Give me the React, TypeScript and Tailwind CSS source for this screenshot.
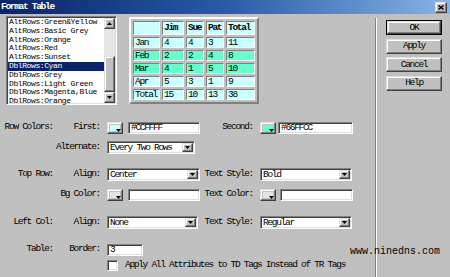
import React from "react";

const sunken =
  "border border-t-[#808080] border-l-[#808080] border-r-white border-b-white shadow-[inset_1px_1px_0_#404040,inset_-1px_-1px_0_#dfdfdf]";
const raised =
  "border border-t-[#dfdfdf] border-l-[#dfdfdf] border-r-[#404040] border-b-[#404040] shadow-[inset_-1px_-1px_0_#808080,inset_1px_1px_0_#ffffff]";

function DownArrow() {
  return (
    <svg width="5" height="3" viewBox="0 0 5 3">
      <path d="M0 0h5L2.5 3z" fill="#000" />
    </svg>
  );
}
function UpArrow() {
  return (
    <svg width="5" height="3" viewBox="0 0 5 3">
      <path d="M0 3h5L2.5 0z" fill="#000" />
    </svg>
  );
}

function Select({ className, value }: { className: string; value: string }) {
  return (
    <div className={`${sunken} ${className} h-[13px] bg-white flex items-stretch p-[1px]`}>
      <span className="flex-1 pl-[1px] leading-[9px] whitespace-nowrap overflow-hidden">{value}</span>
      <div className={`${raised} w-[11px] bg-[#c0c0c0] flex items-center justify-center`}>
        <DownArrow />
      </div>
    </div>
  );
}

function Input({ className, value }: { className: string; value: string }) {
  return (
    <div className={`${sunken} ${className} h-[12px] bg-white flex items-center pl-[2px] leading-[9px]`}>
      {value}
    </div>
  );
}

function Swatch({ fill }: { fill: string }) {
  return (
    <div className={`${raised} w-[16px] h-[12px] bg-[#c0c0c0] p-[2px] relative`}>
      <div className={`w-full h-full ${fill}`} />
      <div className="absolute right-[1px] bottom-[1px] flex">
        <DownArrow />
      </div>
    </div>
  );
}

const listItems = [
  "AltRows:Green&Yellow",
  "AltRows:Basic Grey",
  "AltRows:Orange",
  "AltRows:Red",
  "AltRows:Sunset",
  "DblRows:Cyan",
  "DblRows:Grey",
  "DblRows:Light Green",
  "DblRows:Magenta,Blue",
  "DblRows:Orange",
];

const tableRows: { cells: string[]; bg: string }[] = [
  { cells: ["Jan", "4", "4", "3", "11"], bg: "bg-[#ccffff]" },
  { cells: ["Feb", "2", "2", "4", "8"], bg: "bg-[#66ffcc]" },
  { cells: ["Mar", "4", "1", "5", "10"], bg: "bg-[#66ffcc]" },
  { cells: ["Apr", "5", "3", "1", "9"], bg: "bg-[#ccffff]" },
  { cells: ["Total", "15", "10", "13", "38"], bg: "bg-[#ccffff]" },
];

const cellBorder = "border border-t-[#808080] border-l-[#808080] border-r-white border-b-white";

function Button({ label, def }: { label: string; def?: boolean }) {
  if (def) {
    return (
      <div className="w-[56px] h-[15px] border border-black">
        <div className={`${raised} w-full h-full bg-[#c0c0c0] flex items-center justify-center leading-none`}>
          {label}
        </div>
      </div>
    );
  }
  return (
    <div className={`${raised} w-[56px] h-[15px] bg-[#c0c0c0] flex items-center justify-center leading-none`}>
      {label}
    </div>
  );
}

export default function App() {
  return (
    <div className="w-[450px] h-[277px] bg-[#c0c0c0] relative overflow-hidden flex flex-col text-black font-['Liberation_Mono',monospace] text-[9.5px] tracking-[-1.3px]">
      {/* Title bar */}
      <div className="h-[14px] bg-linear-to-r from-[#0a246a] via-[#2a5aa8] to-[#8ab4e4] flex items-center justify-between pl-[1px] pr-[3px]">
        <span className="text-white font-bold leading-none">Format Table</span>
        <div className={`${raised} w-[12px] h-[11px] bg-[#c0c0c0] flex items-center justify-center`}>
          <svg width="6" height="5" viewBox="0 0 6 5">
            <path d="M0.5 0.5L5.5 4.5M5.5 0.5L0.5 4.5" stroke="#000" strokeWidth="1.4" />
          </svg>
        </div>
      </div>

      {/* Body */}
      <div className="flex-1 flex flex-row">
        {/* Left area */}
        <div className="w-[375px] flex flex-col">
          {/* Top section */}
          <div className="h-[91px] flex items-start pl-[6px]">
            {/* Listbox */}
            <div className={`${sunken} mt-[2px] w-[111px] h-[89px] bg-white flex p-[1px]`}>
              <div className="flex-1 flex flex-col text-[8px] tracking-[-0.4px]">
                {listItems.map((it) => (
                  <div
                    key={it}
                    className={`h-[8.8px] leading-[8.8px] pl-[1px] whitespace-nowrap ${
                      it === "DblRows:Cyan" ? "bg-[#0a246a] text-white" : ""
                    }`}
                  >
                    {it}
                  </div>
                ))}
              </div>
              <div className="w-[11px] flex flex-col">
                <div className={`${raised} h-[11px] bg-[#c0c0c0] flex items-center justify-center`}>
                  <UpArrow />
                </div>
                <div className="flex-1 bg-[#e6e6e6] flex flex-col justify-end">
                  <div className={`${raised} h-[36px] bg-[#c0c0c0]`} />
                </div>
                <div className={`${raised} h-[11px] bg-[#c0c0c0] flex items-center justify-center`}>
                  <DownArrow />
                </div>
              </div>
            </div>

            {/* Preview table */}
            <div className="ml-[12px] mt-[3px] border-2 border-t-white border-l-white border-r-[#808080] border-b-[#808080] bg-[#c0c0c0] p-[2px] grid grid-cols-[27px_22px_18px_18px_29px] grid-rows-[14px_11px_11px_11px_11px_11px] gap-[2px]">
              {["", "Jim", "Sue", "Pat", "Total"].map((h, i) => (
                <div key={"h" + i} className={`${cellBorder} bg-[#ccffff] font-bold flex items-center pl-[1px] leading-none`}>
                  {h}
                </div>
              ))}
              {tableRows.map((r) =>
                r.cells.map((c, i) => (
                  <div key={r.cells[0] + i} className={`${cellBorder} ${r.bg} flex items-center pl-[1px] leading-none`}>
                    {c}
                  </div>
                ))
              )}
            </div>
          </div>

          {/* Row Colors */}
          <div className="mt-[16px] h-[13px] flex items-center">
            <span className="w-[53px] text-right">Row Colors:</span>
            <span className="w-[47px] text-right">First:</span>
            <div className="ml-[7px]"><Swatch fill="bg-[#ccffff]" /></div>
            <Input className="ml-[5px] w-[72px]" value="#CCFFFF" />
            <span className="w-[53px] text-right">Second:</span>
            <div className="ml-[7px]"><Swatch fill="bg-[#66ffcc]" /></div>
            <Input className="ml-[2px] w-[75px]" value="#66FFCC" />
          </div>

          {/* Alternate */}
          <div className="mt-[7px] h-[13px] flex items-center">
            <span className="w-[53px]" />
            <span className="w-[47px] text-right">Alternate:</span>
            <Select className="ml-[7px] w-[88px]" value="Every Two Rows" />
          </div>

          {/* Top Row */}
          <div className="mt-[14px] h-[13px] flex items-center">
            <span className="w-[53px] text-right">Top Row:</span>
            <span className="w-[47px] text-right">Align:</span>
            <Select className="ml-[7px] w-[93px]" value="Center" />
            <span className="w-[53px] text-right">Text Style:</span>
            <Select className="ml-[7px] w-[92px]" value="Bold" />
          </div>

          {/* Bg Color */}
          <div className="mt-[7px] h-[13px] flex items-center">
            <span className="w-[53px]" />
            <span className="w-[47px] text-right">Bg Color:</span>
            <div className="ml-[7px]"><Swatch fill="bg-[#e4e4e4]" /></div>
            <Input className="ml-[5px] w-[72px]" value="" />
            <span className="w-[53px] text-right">Text Color:</span>
            <div className="ml-[7px]"><Swatch fill="bg-[#e4e4e4]" /></div>
            <Input className="ml-[4px] w-[73px]" value="" />
          </div>

          {/* Left Col */}
          <div className="mt-[15px] h-[13px] flex items-center">
            <span className="w-[53px] text-right">Left Col:</span>
            <span className="w-[47px] text-right">Align:</span>
            <Select className="ml-[7px] w-[91px]" value="None" />
            <span className="w-[55px] text-right">Text Style:</span>
            <Select className="ml-[7px] w-[92px]" value="Regular" />
          </div>

          {/* Table */}
          <div className="mt-[14px] h-[13px] flex items-center">
            <span className="w-[53px] text-right">Table:</span>
            <span className="w-[47px] text-right">Border:</span>
            <Input className="ml-[7px] w-[36px]" value="3" />
          </div>

          {/* Checkbox */}
          <div className="mt-[3px] h-[13px] flex items-center">
            <div className={`${sunken} ml-[107px] w-[11px] h-[11px] bg-white`} />
            <span className="ml-[7px] whitespace-nowrap">Apply All Attributes to TD Tags Instead of TR Tags</span>
          </div>
        </div>

        {/* Divider */}
        <div className="mt-[4px] w-[2px] border-l border-l-[#808080] border-r border-r-white" />

        {/* Buttons */}
        <div className="ml-[9px] pt-[6px] flex flex-col gap-[3.5px]">
          <Button label="OK" def />
          <Button label="Apply" />
          <Button label="Cancel" />
          <Button label="Help" />
        </div>
      </div>

      {/* Watermark */}
      <div className="absolute left-[350px] top-[247px] text-[10px] tracking-[0px] leading-none text-black">
        www.ninedns.com
      </div>
    </div>
  );
}
